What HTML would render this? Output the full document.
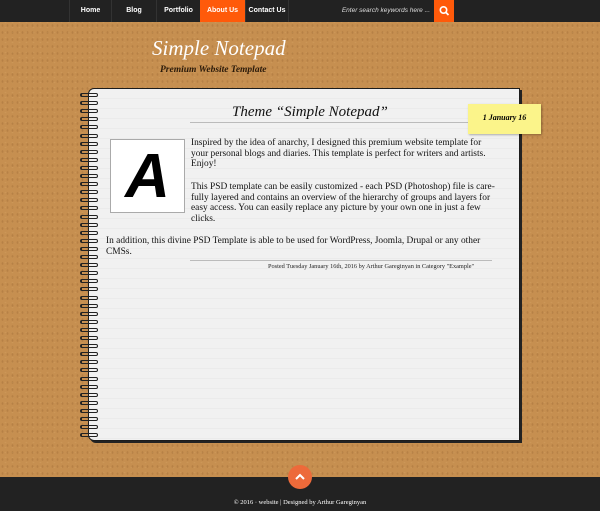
<!DOCTYPE html>
<html><head><style>
*{margin:0;padding:0;box-sizing:border-box}
body{width:600px;height:511px;overflow:hidden;position:relative;background:#c48d4d;font-family:"Liberation Serif",serif}
.cork{position:absolute;left:0;top:22px;width:600px;height:455px;background:#c68f50;
background-image:radial-gradient(rgba(110,65,20,.18) 0.7px,transparent 1.2px),radial-gradient(rgba(230,185,120,.18) 0.7px,transparent 1.2px);
background-size:5px 7px,7px 5px;background-position:0 0,2px 3px}
.nav{position:absolute;left:0;top:0;width:600px;height:22px;background:#222}
.nav a{position:absolute;top:0;height:22px;color:#fff;font:bold 7px "Liberation Sans",sans-serif;line-height:22px;text-align:center;border-left:1px solid #333}
.search{position:absolute;left:330px;top:0;width:100px;height:22px;color:#ddd;font:italic 6.5px "Liberation Sans",sans-serif;line-height:22px;text-align:right}
.sbtn{position:absolute;left:434px;top:0;width:20px;height:22px;background:#ff5a0a}
.title{position:absolute;left:152px;top:36px;color:#fff;font:italic 21px "Liberation Serif",serif}
.sub{position:absolute;left:160px;top:65px;color:#2a1a0a;font:italic bold 9.5px "Liberation Serif",serif}
.paper{position:absolute;left:88px;top:88px;width:432px;height:353px;background:#f1f1f1;border:1.5px solid #1c1c1c;border-radius:6px 0 0 6px;box-shadow:2px 2px 0 #222;
background-image:repeating-linear-gradient(to bottom,transparent 0,transparent 9px,#ebebeb 9px,#ebebeb 10px)}
.ring{position:absolute;left:80px;width:18px;height:4px;border:1.3px solid #222;border-radius:2px;border-left-width:2px}
.h{position:absolute;left:232px;top:104px;font:italic 15px "Liberation Serif",serif;color:#111}
.hr{position:absolute;left:190px;width:302px;height:1px;background:#bbb}
.note{position:absolute;left:468px;top:104px;width:73px;height:30px;background:#fbf48a;font:italic bold 8px "Liberation Serif",serif;text-align:center;line-height:28px;box-shadow:1px 1px 2px rgba(0,0,0,.3)}
.img{position:absolute;left:110px;top:139px;width:75px;height:74px;background:#fff;border:1px solid #aaa;font:italic bold 62px "Liberation Sans",sans-serif;text-align:center;line-height:74px;color:#000}
.p{position:absolute;font-size:9.4px;line-height:10.7px;color:#111;white-space:nowrap}
.post{position:absolute;left:268px;top:263px;font-size:6.3px;color:#222}
.foot{position:absolute;left:0;top:477px;width:600px;height:34px;background:#222}
.up{position:absolute;left:288px;top:465px;width:24px;height:24px;border-radius:50%;background:#ed6a3a}
.ft{position:absolute;left:0;width:600px;top:499px;text-align:center;color:#fff;font-size:6.5px}
</style></head><body>
<div class="cork"></div>
<div class="nav">
<a style="left:69px;width:42px">Home</a>
<a style="left:111px;width:45px">Blog</a>
<a style="left:156px;width:44px">Portfolio</a>
<a style="left:200px;width:45px;background:#ff5a0a;border:0">About Us</a>
<a style="left:245px;width:44px;border-right:1px solid #333">Contact Us</a>
<div class="search">Enter search keywords here ...</div>
<div class="sbtn"><svg width="20" height="22"><circle cx="9.5" cy="10" r="3.2" fill="none" stroke="#fff" stroke-width="1.6"/><line x1="12" y1="12.5" x2="14.5" y2="15" stroke="#fff" stroke-width="1.8"/></svg></div>
</div>
<div class="title">Simple Notepad</div>
<div class="sub">Premium Website Template</div>
<div class="paper"></div>
<div id="rings"></div>
<script>
var s='';for(var y=93;y<438;y+=8.1){s+='<div class="ring" style="top:'+y+'px"></div>'}document.getElementById('rings').innerHTML=s;
</script>
<div class="h">Theme “Simple Notepad”</div>
<div class="hr" style="top:122px"></div>
<div class="note">1 January 16</div>
<div class="img">A</div>
<div class="p" style="left:191px;top:138px">Inspired by the idea of anarchy, I designed this premium website template for<br>your personal blogs and diaries. This template is perfect for writers and artists.<br>Enjoy!</div>
<div class="p" style="left:191px;top:182px">This PSD template can be easily customized - each PSD (Photoshop) file is care-<br>fully layered and contains an overview of the hierarchy of groups and layers for<br>easy access. You can easily replace any picture by your own one in just a few<br>clicks.</div>
<div class="p" style="left:106px;top:236px">In addition, this divine PSD Template is able to be used for WordPress, Joomla, Drupal or any other<br>CMSs.</div>
<div class="hr" style="top:260px"></div>
<div class="post">Posted Tuesday January 16th, 2016 by Arthur Gareginyan in Category "Example"</div>
<div class="foot"></div>
<div class="up"><svg width="24" height="24"><polyline points="8,14 12,10 16,14" fill="none" stroke="#fff" stroke-width="2"/></svg></div>
<div class="ft">© 2016 · website | Designed by Arthur Gareginyan</div>
</body></html>
